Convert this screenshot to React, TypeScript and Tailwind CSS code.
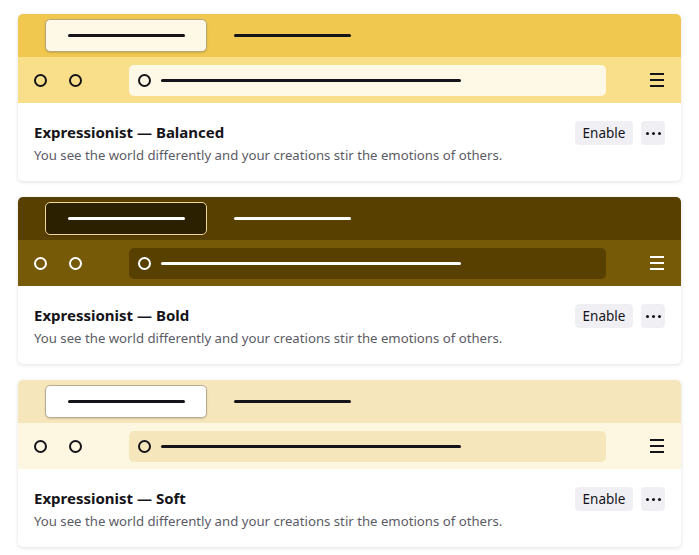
import React from "react";

interface Theme {
  name: string;
  top: string;
  bar: string;
  url: string;
  tab: string;
  ink: string;
}

const themes: Theme[] = [
  {
    name: "Expressionist — Balanced",
    top: "bg-[#f0c850]",
    bar: "bg-[#fadf8b]",
    url: "bg-[#fef8e6]",
    tab: "bg-[#fef8e6] border-[#b9a677]",
    ink: "bg-[#15141a]",
  },
  {
    name: "Expressionist — Bold",
    top: "bg-[#574000]",
    bar: "bg-[#765a08]",
    url: "bg-[#574000]",
    tab: "bg-[#2b2000] border-[#f3d98f]",
    ink: "bg-white",
  },
  {
    name: "Expressionist — Soft",
    top: "bg-[#f6e6bc]",
    bar: "bg-[#fdf6e1]",
    url: "bg-[#f6e6bc]",
    tab: "bg-white border-[#b8ad93]",
    ink: "bg-[#15141a]",
  },
];

const Preview = ({ t }: { t: Theme }) => {
  const light = t.ink === "bg-white";
  const border = light ? "border-white" : "border-[#15141a]";
  return (
    <div>
      <div className={`h-[43px] ${t.top} flex items-start pl-[27px] pt-[5px]`}>
        <div className={`w-[162px] h-[33px] rounded-[5px] border ${t.tab} shadow-[0_1px_2px_rgba(0,0,0,0.15)] flex items-center pl-[22px]`}>
          <div className={`w-[117px] h-[3px] rounded-full ${t.ink}`} />
        </div>
        <div className={`ml-[27px] mt-[15px] w-[117px] h-[3px] rounded-full ${t.ink}`} />
      </div>
      <div className={`h-[46px] ${t.bar} flex items-center pl-[16px] pr-[16px]`}>
        <div className={`w-[13px] h-[13px] rounded-full border-2 ${border}`} />
        <div className={`ml-[22px] w-[13px] h-[13px] rounded-full border-2 ${border}`} />
        <div className={`ml-[47px] w-[477px] h-[31px] rounded-[5px] ${t.url} flex items-center pl-[9px]`}>
          <div className={`w-[13px] h-[13px] rounded-full border-2 ${border}`} />
          <div className={`ml-[10px] w-[300px] h-[3px] rounded-full ${t.ink}`} />
        </div>
        <div className="ml-auto flex flex-col gap-[4px] w-[14px] mr-[1px]">
          <div className={`h-[2px] ${t.ink}`} />
          <div className={`h-[2px] ${t.ink}`} />
          <div className={`h-[2px] ${t.ink}`} />
        </div>
      </div>
    </div>
  );
};

const Card = ({ t }: { t: Theme }) => (
  <div className="rounded-[5px] overflow-hidden bg-white shadow-[0_1px_4px_rgba(0,0,0,0.12)] h-[167px]">
    <Preview t={t} />
    <div className="flex items-start px-4 pt-[19px]">
      <div className="flex-1">
        <div className="text-[15px] leading-[20px] font-bold text-[#15141a]">{t.name}</div>
        <div className="text-[13.2px] leading-[24px] mt-[1px] text-[#5b5b66]">
          You see the world differently and your creations stir the emotions of others.
        </div>
      </div>
      <button className="-mt-[1px] h-6 w-[58px] rounded-[4px] bg-[#f0f0f4] text-[13.5px] text-[#15141a]">
        Enable
      </button>
      <button className="-mt-[1px] ml-2 h-6 w-6 rounded-[4px] bg-[#f0f0f4] flex items-center justify-center gap-[3px]">
        <span className="w-[3px] h-[3px] rounded-full bg-[#15141a]" />
        <span className="w-[3px] h-[3px] rounded-full bg-[#15141a]" />
        <span className="w-[3px] h-[3px] rounded-full bg-[#15141a]" />
      </button>
    </div>
  </div>
);

export default function App() {
  return (
    <div
      className="w-[699px] h-[555px] bg-white px-[18px] pt-[14px] flex flex-col gap-4"
      style={{ fontFamily: '"Noto Sans", sans-serif' }}
    >
      {themes.map((t) => (
        <Card key={t.name} t={t} />
      ))}
    </div>
  );
}
